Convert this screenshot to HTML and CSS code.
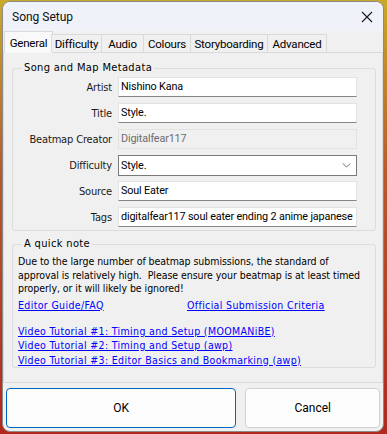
FILE: index.html
```html
<!DOCTYPE html>
<html>
<head>
<meta charset="utf-8">
<link rel="stylesheet" href="styles.css">
</head>
<body>
<div class="window">
  <div class="titlebar">
    <span class="title">Song Setup</span>
    <svg class="close" width="12" height="12" viewBox="0 0 12 12"><path d="M1 1 L11 11 M11 1 L1 11" stroke="#1a1a1a" stroke-width="1.1" fill="none"/></svg>
  </div>
  <div class="tabs">
    <div class="tab active w-general">General</div>
    <div class="tab w-diff">Difficulty</div>
    <div class="tab w-audio">Audio</div>
    <div class="tab w-colours">Colours</div>
    <div class="tab w-story">Storyboarding</div>
    <div class="tab w-adv">Advanced</div>
  </div>
  <div class="panel">
    <fieldset class="group meta">
      <legend>Song and Map Metadata</legend>
      <div class="form">
        <label>Artist</label><div class="field">Nishino Kana</div>
        <label>Title</label><div class="field">Style.</div>
        <label>Beatmap Creator</label><div class="field disabled">Digitalfear117</div>
        <label>Difficulty</label><div class="field combo"><span>Style.</span><svg width="10" height="6" viewBox="0 0 10 6"><path d="M0.5 0.5 L5 5 L9.5 0.5" stroke="#555" stroke-width="1" fill="none"/></svg></div>
        <label>Source</label><div class="field">Soul Eater</div>
        <label>Tags</label><div class="field">digitalfear117 soul eater ending 2 anime japanese</div>
      </div>
    </fieldset>
    <fieldset class="group note">
      <legend>A quick note</legend>
      <p class="notetext">Due to the large number of beatmap submissions, the standard of<br>approval is relatively high.&nbsp; Please ensure your beatmap is at least timed<br>properly, or it will likely be ignored!</p>
      <div class="linkrow">
        <a href="#">Editor Guide/FAQ</a>
        <a href="#" class="crit">Official Submission Criteria</a>
      </div>
      <div class="videos">
        <a href="#">Video Tutorial #1: Timing and Setup (MOOMANiBE)</a>
        <a href="#">Video Tutorial #2: Timing and Setup (awp)</a>
        <a href="#">Video Tutorial #3: Editor Basics and Bookmarking (awp)</a>
      </div>
    </fieldset>
  </div>
  <div class="buttons">
    <button class="btn ok">OK</button>
    <button class="btn cancel">Cancel</button>
  </div>
</div>
</body>
</html>
```
FILE: styles.css
```css
html, body {
  margin: 0;
  padding: 0;
}
body {
  width: 387px;
  height: 434px;
  overflow: hidden;
  background: linear-gradient(180deg, #c9a92a 0%, #b8582a 40%, #b0281e 100%);
  font-family: "DejaVu Sans Condensed", "DejaVu Sans", sans-serif;
  font-size: 11px;
  color: #000;
}
.window {
  margin: 1px 2px 0 2px;
  width: 380px;
  height: 429px;
  border: 1px solid #8a8a8a;
  border-radius: 8px;
  background: #f0f0f0;
  overflow: hidden;
  display: flex;
  flex-direction: column;
}
.titlebar {
  height: 29px;
  flex: none;
  background: #eff3f9;
  display: flex;
  align-items: center;
  justify-content: space-between;
  padding: 0 8px 0 9px;
  font-family: Roboto, "Noto Sans", sans-serif;
  font-size: 12px;
}
.title {
  color: #111;
}
.close {
  margin-right: 2px;
}
.tabs {
  display: flex;
  height: 21px;
  padding-left: 1px;
  flex: none;
  align-items: flex-end;
  font-family: Roboto, "Noto Sans", sans-serif;
  font-size: 11.5px;
  letter-spacing: -0.2px;
  position: relative;
  z-index: 1;
}
.tab {
  height: 18px;
  box-sizing: border-box;
  border: 1px solid #dadada;
  border-bottom: none;
  margin-left: -1px;
  background: #f0f0f0;
  display: flex;
  align-items: center;
  justify-content: center;
  color: #000;
}
.tab.active {
  background: #f9f9f9;
  margin-bottom: -1px;
  height: 22px;
  margin-right: -2px;
  margin-left: 0;
}
.tab.active + .tab { margin-left: 0; }
.w-general { width: 49px; }
.w-diff { width: 51px; }
.w-audio { width: 43px; }
.w-colours { width: 48px; }
.w-story { width: 78px; }
.w-adv { width: 60px; }

.panel {
  height: 331px;
  box-sizing: border-box;
  border: 1px solid #dadada;
  padding: 0 6px 0 8px;
  flex: none;
}
.group {
  border: 1px solid #dcdcdc;
  border-radius: 3px;
  margin: 0;
  min-width: 0;
}
.group legend {
  padding: 0 2px;
  margin-left: 4px;
  line-height: 14px;
  font-size: 11px;
  letter-spacing: 0.35px;
}
.meta {
  margin-top: 8px;
  padding: 2px 16px 3px 5px;
}
.form {
  display: grid;
  grid-template-columns: 94px 239px;
  column-gap: 6px;
  row-gap: 6px;
}
.form label {
  text-align: right;
  align-self: center;
  white-space: nowrap;
  color: #1a1a1a;
  letter-spacing: -0.15px;
}
.field {
  height: 20px;
  box-sizing: border-box;
  background: #fff;
  border: 1px solid #e2e2e2;
  border-bottom: 1px solid #868686;
  font-family: Roboto, "Noto Sans", sans-serif;
  font-size: 10.8px;
  letter-spacing: -0.15px;
  padding: 0 2px;
  line-height: 18px;
  white-space: nowrap;
  overflow: hidden;
}
.field.disabled {
  background: #f0f0f0;
  border: 1px solid #e2e2e2;
  color: #6d6d6d;
}
.field.combo {
  height: 21px;
  border: 1px solid #7a7a7a;
  display: flex;
  align-items: center;
  justify-content: space-between;
  padding: 0 5px 0 2px;
  margin-bottom: -1px;
}
.combo svg { width: 9px; height: 5px; }
.note {
  margin-top: 6px;
  padding: 2px 6px 2px 5px;
  height: 131px;
  box-sizing: border-box;
  font-size: 10.5px;
  letter-spacing: -0.05px;
}
.notetext {
  margin: 2px 0 0 0;
  white-space: nowrap;
  line-height: 13.5px;
}
.linkrow {
  display: flex;
  margin-top: 2px;
  line-height: 14px;
  letter-spacing: 0.35px;
}
.linkrow a:first-child { width: 169px; }
a {
  color: #0000ff;
  text-decoration: underline;
}
.videos {
  display: flex;
  flex-direction: column;
  margin-top: 12px;
  line-height: 14.5px;
  letter-spacing: 0.35px;
}
.buttons {
  display: flex;
  gap: 9px;
  padding: 5px 3px 0 3px;
}
.btn {
  height: 40px;
  box-sizing: border-box;
  background: #fdfdfd;
  border-radius: 4px;
  font-family: Roboto, "Noto Sans", sans-serif;
  font-size: 12px;
  color: #000;
  padding: 0;
}
.ok {
  width: 231px;
  border: 1px solid #0067c0;
}
.cancel {
  width: 135px;
  border: 1px solid #d0d0d0;
}
```
